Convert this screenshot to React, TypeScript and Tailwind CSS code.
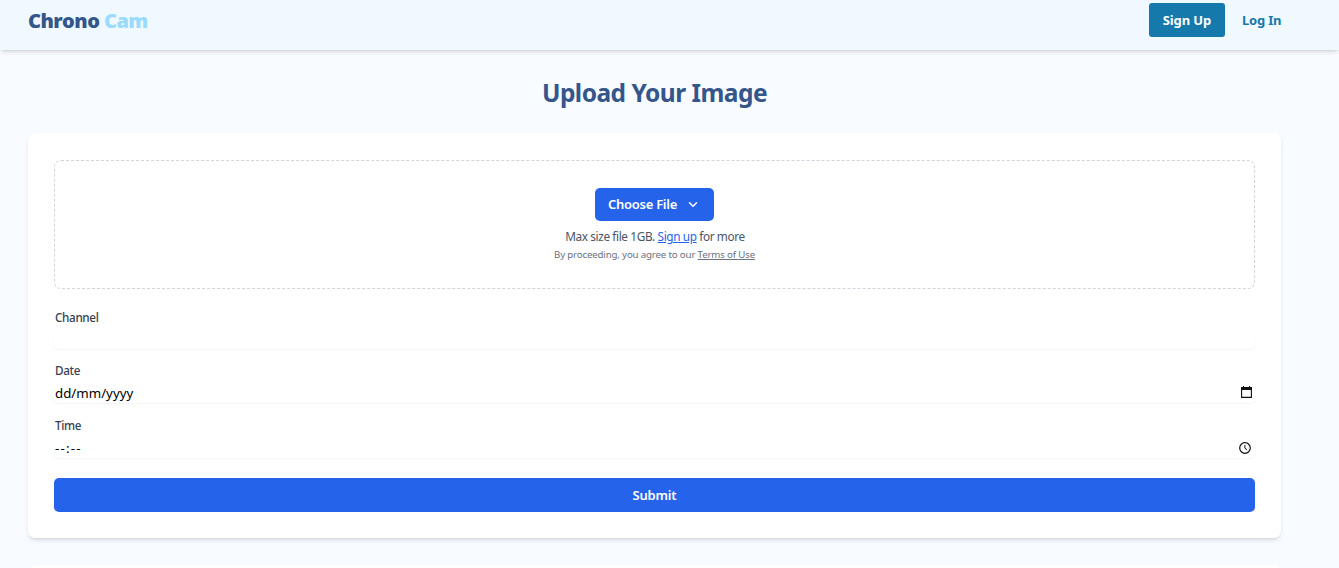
import React from "react";

function Field({ label, className, children }: { label: string; className: string; children?: React.ReactNode }) {
  return (
    <div className={className}>
      <div className="h-[17px] pl-px text-[11.7px] leading-[17px] font-medium tracking-[-0.35px] text-[#374151]">{label}</div>
      <div className="mt-[4px] flex h-[20px] items-center justify-between rounded-[5px] shadow-[0_1px_2px_0_rgba(0,0,0,0.05)]">
        {children}
      </div>
    </div>
  );
}

export default function App() {
  return (
    <div className="h-[568px] overflow-hidden bg-[#f8fbff] font-['Noto_Sans','Open_Sans',sans-serif]">
      <header className="flex h-[50px] items-start justify-between bg-[#f0f9ff] pr-[58px] pl-[28px] shadow-[0_3px_5px_-1px_rgba(0,0,0,0.12),0_2px_3px_-2px_rgba(0,0,0,0.12)]">
        <div className="pt-[7px] font-['Open_Sans',sans-serif] text-[20px] leading-[28px] font-extrabold tracking-[-0.55px] whitespace-nowrap text-[#34568b]">
          Chrono <span className="text-[#9adcff]">Cam</span>
        </div>
        <nav className="flex items-center pt-[3px] text-[13px] font-bold whitespace-nowrap">
          <a className="flex h-[34px] w-[76px] items-center justify-center rounded-[3px] bg-[#1679ab] pt-[2px] tracking-[-0.1px] text-white">Sign Up</a>
          <a className="ml-[17px] w-[39px] pt-[2px] tracking-[-0.2px] text-[#1679ab]">Log In</a>
        </nav>
      </header>
      <main className="pr-[58px] pl-[28px]">
        <h1 className="flex h-[83px] items-center justify-center pt-[4px] text-[24.5px] font-bold tracking-[-0.52px] text-[#34568b]">
          Upload Your Image
        </h1>
        <section className="h-[405px] rounded-[7px] bg-white px-[26px] pt-[27px] shadow-[0_3px_5px_-1px_rgba(0,0,0,0.12),0_2px_3px_-2px_rgba(0,0,0,0.12)]">
          <div className="flex h-[129px] flex-col items-center rounded-[7px] border border-dashed border-[#d1d5db] pt-[27px]">
            <button className="flex h-[33px] w-[119px] items-center justify-between rounded-[5px] bg-[#2563eb] pr-[15px] pl-[13px] text-[13px] font-semibold tracking-[-0.27px] whitespace-nowrap text-white">
              Choose File
              <svg className="h-[12px] w-[12px]" viewBox="0 0 12 12" fill="none" stroke="currentColor" strokeWidth="1.5" strokeLinecap="round" strokeLinejoin="round">
                <path d="M2.5 3.7 6 7.2l3.5-3.5" />
              </svg>
            </button>
            <p className="mt-[6px] h-[18px] pl-px text-[11.8px] leading-[18px] tracking-[-0.38px] whitespace-nowrap text-[#4b5563]">
              Max size file 1GB. <a className="text-[#2563eb] underline">Sign up</a> for more
            </p>
            <p className="mt-[3px] h-[14px] text-[9.7px] leading-[14px] tracking-[-0.16px] whitespace-nowrap text-[#6b7280]">
              By proceeding, you agree to our <a className="underline">Terms of Use</a>
            </p>
          </div>
          <Field label="Channel" className="mt-[19px] pt-px [&>div:last-child]:mt-[3px]" />
          <Field label="Date" className="mt-[13px]">
            <span className="pl-[1px] text-[13.3px] leading-[18px] text-black">dd/mm/yyyy</span>
            <svg className="mr-[3px] mb-[2px] h-[12px] w-[11px]" viewBox="0 0 11 12" fill="none">
              <path d="M.6 2.5h9.8v8.9H.6z" stroke="#111" strokeWidth="1.1" />
              <path d="M0 1h11v3H0zM2 0h1v2H2zM8 0h1v2H8z" fill="#111" />
            </svg>
          </Field>
          <Field label="Time" className="mt-[14px]">
            <span className="pl-[1px] text-[13.3px] leading-[18px] tracking-[1.2px] text-black">--:--</span>
            <svg className="mr-[4px] h-[12px] w-[12px]" viewBox="0 0 12 12" fill="none" stroke="#111">
              <circle cx="6" cy="6" r="5.3" strokeWidth="1.2" />
              <path d="M5.9 3v3.2l2.2 1.6" />
            </svg>
          </Field>
          <button className="mt-[20px] flex h-[34px] w-full items-center justify-center rounded-[5px] bg-[#2563eb] pt-[2px] text-[13px] font-semibold tracking-[-0.2px] text-white">
            Submit
          </button>
        </section>
        <section className="mt-[27px] h-[80px] rounded-[7px] bg-white shadow-[0_3px_5px_-1px_rgba(0,0,0,0.12)]" />
      </main>
    </div>
  );
}
